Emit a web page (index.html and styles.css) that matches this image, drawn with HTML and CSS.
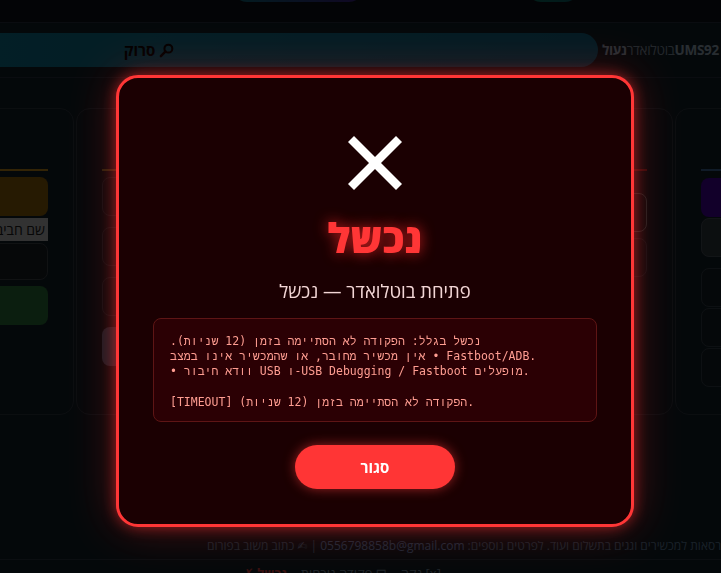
FILE: index.html
```html
<!DOCTYPE html>
<html lang="he">
<head>
    <meta charset="UTF-8">
    <meta name="viewport" content="width=device-width, initial-scale=1.0">
    <title>UMS92 - פתיחת בוטלואדר</title>
    <link rel="stylesheet" href="styles.css">
</head>
<body>
    <div class="page">
        <div class="topbar">
            <span class="tab tab-main"></span>
            <span class="tab tab-alt"></span>
        </div>

        <header class="toolbar">
            <div class="scan-bar">
                <span class="scan-btn" dir="rtl">
                    <svg class="scan-icon" viewBox="0 0 16 16" width="15" height="15">
                        <circle cx="10" cy="6" r="4.2" fill="none" stroke="currentColor" stroke-width="2.2"/>
                        <line x1="7" y1="9" x2="2" y2="14" stroke="currentColor" stroke-width="2.6" stroke-linecap="round"/>
                    </svg>
                    סרוק
                </span>
            </div>
            <div class="brand" dir="rtl">
                <b>UMS92</b><span>בוטלואדר</span><b>נעול</b>
            </div>
        </header>

        <div class="panels">
            <section class="panel">
                <div class="panel-head head-orange"></div>
                <div class="card card-orange"></div>
                <div class="nick" dir="rtl">שם חביב</div>
                <div class="card card-dark"></div>
                <div class="card card-green"></div>
            </section>
            <section class="panel panel-left panel-loose">
                <div class="panel-head head-olive"></div>
                <div class="card card-line"></div>
                <div class="card card-line"></div>
                <div class="card card-line"></div>
                <div class="card card-blue"></div>
            </section>
            <section class="panel panel-right">
                <div class="panel-head head-red"></div>
                <div class="card card-outline"></div>
                <div class="card card-line"></div>
            </section>
            <section class="panel panel-left panel-tight">
                <div class="panel-head head-blue"></div>
                <div class="card card-purple"></div>
                <div class="card card-gray"></div>
                <div class="card card-line"></div>
                <div class="card card-line"></div>
                <div class="card card-line"></div>
            </section>
        </div>

        <footer class="footer">
            <span dir="rtl">גרסה חינמית לשימוש אישי. יש אפשרות גרסאות למכשירים וגגים בתשלום ועוד. לפרטים נוספים: <a class="mail">0556798858b@gmail.com</a> | ✍ כתוב משוב בפורום</span>
        </footer>
        <div class="status-row">
            <span class="status-fail">✗ נכשל</span>
            <span dir="rtl">⊟ פקודה נוכחית</span>
            <span class="status-clear" dir="rtl">[x] נקה</span>
        </div>
    </div>

    <div class="overlay">
        <div class="modal">
            <svg class="fail-icon" viewBox="0 0 60 60" width="60" height="60">
                <line x1="6" y1="6" x2="54" y2="54" stroke="#fff" stroke-width="8.5"/>
                <line x1="54" y1="6" x2="6" y2="54" stroke="#fff" stroke-width="8.5"/>
            </svg>
            <h1 class="modal-title">נכשל</h1>
            <p class="modal-sub" dir="rtl">פתיחת בוטלואדר — נכשל</p>
            <div class="log" dir="ltr">
                <div class="log-line"><span dir="rtl">נכשל בגלל: הפקודה לא הסתיימה בזמן (12 שניות).</span></div>
                <div class="log-line"><span dir="rtl">• אין מכשיר מחובר, או שהמכשיר אינו במצב</span> Fastboot/ADB.</div>
                <div class="log-line">• וודא חיבור USB ו-USB Debugging / Fastboot מופעלים.</div>
                <div class="log-line log-gap"></div>
                <div class="log-line">[TIMEOUT] הפקודה לא הסתיימה בזמן (12 שניות).</div>
            </div>
            <button class="close-btn">סגור</button>
        </div>
    </div>
</body>
</html>
```

FILE: styles.css
```css
html, body {
    height: 100%;
}
body {
    margin: 0;
    font-family: "Open Sans", "DejaVu Sans", sans-serif;
    background-color: #16242d;
    color: #c1d8ea;
    overflow: hidden;
}
.page {
    width: 721px;
    overflow: hidden;
}

/* top strip */
.topbar {
    height: 22px;
    background-color: #0e161b;
    border-bottom: 1px solid #2d3a48;
    position: relative;
    overflow: hidden;
}
.tab {
    position: absolute;
    top: -30px;
    height: 32px;
    border-radius: 0 0 14px 14px;
}
.tab-main {
    left: 233px;
    width: 130px;
    background: linear-gradient(90deg, #0e7f92, #4a22a0);
}
.tab-alt {
    left: 527px;
    width: 52px;
    background: linear-gradient(90deg, #0e8a72, #0c6e7c);
}

/* toolbar */
.toolbar {
    display: flex;
    align-items: center;
    gap: 4px;
    margin-top: 10px;
    padding-bottom: 10px;
    border-bottom: 1px solid #2d3a48;
}
.scan-bar {
    flex: none;
    width: 898px;
    margin-left: -300px;
    height: 34px;
    border-radius: 17px;
    background: linear-gradient(90deg, #0f96b4, #0e789c);
    display: flex;
    align-items: center;
    justify-content: center;
}
.scan-btn {
    display: flex;
    align-items: center;
    gap: 4px;
    color: #000;
    font-weight: 700;
    font-size: 15px;
}
.brand {
    flex: none;
    display: flex;
    font-size: 13.5px;
    letter-spacing: -0.3px;
    white-space: nowrap;
    color: #b8cde0;
}
.brand span {
    color: #98aec0;
}
.brand b {
    font-weight: 700;
}

/* board columns */
.panels {
    display: grid;
    grid-template-columns: 174px 1fr 1fr 146px;
    gap: 2px;
    margin: 30px -100px 0 -100px;
    height: 307px;
}
.panel {
    border: 1px solid #32404c;
    border-radius: 14px;
    padding: 0 25px;
    display: flex;
    flex-direction: column;
    gap: 6px;
}
.panel-left {
    padding-right: 0;
}
.panel-right {
    padding-left: 0;
}
.panel-loose {
    gap: 11px;
}
.panel-loose .panel-head {
    margin-bottom: -5px;
}
.panel-tight {
    gap: 1px;
}
.panel-tight .panel-head {
    margin-bottom: 6px;
}
.panel-tight .card-gray {
    margin-bottom: 10px;
}
.panel-head {
    height: 60px;
    border-bottom: 2px solid;
}
.head-orange { border-color: #e8a21e; }
.head-olive { border-color: #a89838; }
.head-red { border-color: #d03030; }
.head-blue { border-color: #4a7cb8; }

.card {
    height: 39px;
    border-radius: 8px;
    border: 1px solid transparent;
    box-sizing: border-box;
}
.card-orange { background-color: #ab750d; }
.card-dark { background-color: #1b2429; border-color: #485158; height: 37px; }
.card-green { background-color: #328744; }
.card-line { border-color: #3e4c58; background-color: #1a262e; }
.card-blue { background-color: #6a7fa0; }
.card-outline { border-color: #7a9494; margin-top: 16px; }
.card-purple { background-color: #5100bd; }
.card-gray { background-color: #3a444c; border-color: #55606a; }
.nick {
    height: 23px;
    margin: -4px 0 -4px;
    background-color: #e2e2e2;
    color: #222;
    font-size: 14px;
    line-height: 23px;
    padding-right: 3px;
    white-space: nowrap;
    overflow: hidden;
}

/* footer */
.footer {
    margin-top: 122px;
    padding: 0 0 4px 207px;
    border-bottom: 1px solid #324350;
    white-space: nowrap;
    font-size: 12px;
    line-height: 18px;
    color: #6f96b8;
}
.mail {
    color: #7faee8;
}
.status-row {
    display: flex;
    gap: 14px;
    padding: 4px 0 0 243px;
    font-size: 13px;
    color: #8aa4ba;
    white-space: nowrap;
}
.status-fail {
    color: #ff4848;
    font-weight: 700;
}

/* dialog */
.overlay {
    position: fixed;
    inset: 0;
    padding: 29px 0 0 29px;
    background-color: rgba(0, 0, 0, 0.78);
    display: flex;
    align-items: center;
    justify-content: center;
}
.modal {
    box-sizing: border-box;
    width: 518px;
    padding: 55px 34px 35px;
    background-color: #1b0002;
    border: 3px solid #ff3636;
    border-radius: 22px;
    box-shadow: 0 0 14px rgba(255, 50, 50, 0.55), 0 0 45px rgba(255, 40, 40, 0.3);
    text-align: center;
}
.fail-icon {
    display: block;
    margin: 0 auto;
}
.modal-title {
    margin: 20px 0 18px;
    font-size: 41px;
    line-height: 48px;
    font-weight: 800;
    color: #ff3636;
    text-shadow: 0 0 14px rgba(255, 40, 40, 0.75);
}
.modal-sub {
    margin: 0;
    font-size: 18.5px;
    line-height: 24px;
    font-weight: 500;
    color: #f3d6d6;
}
.log {
    margin: 15px 0 23px;
    padding: 15px 16px 11px;
    border: 1px solid #5e1515;
    border-radius: 8px;
    background-color: #2b0004;
    text-align: left;
    font-family: "DejaVu Sans Mono", "Liberation Mono", monospace;
    font-size: 11.5px;
    line-height: 15.25px;
    color: #ff9d92;
    white-space: nowrap;
}
.log-gap {
    height: 15.25px;
}
.close-btn {
    width: 160px;
    height: 44px;
    border: none;
    border-radius: 22px;
    background-color: #ff3535;
    color: #fff;
    font-family: inherit;
    font-size: 15px;
    font-weight: 700;
    box-shadow: 0 0 12px rgba(255, 60, 60, 0.55);
}
```
